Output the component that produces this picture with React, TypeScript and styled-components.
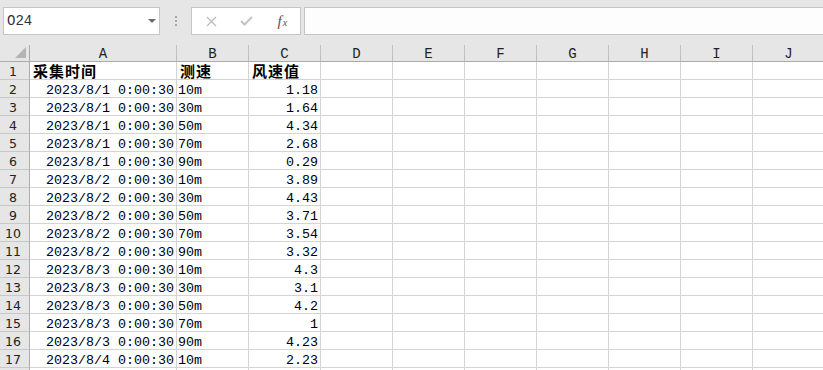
import React from "react";
import styled, { createGlobalStyle } from "styled-components";

const Global = createGlobalStyle`
  html, body { margin: 0; padding: 0; overflow: hidden; background: #ffffff; }
  * { box-sizing: border-box; }
`;

const Page = styled.div`
  width: 823px;
  height: 370px;
  overflow: hidden;
  background: #ffffff;
  display: flex;
  flex-direction: column;
`;

const Toolbar = styled.div`
  height: 45px;
  flex: none;
  background: #e6e6e6;
  display: flex;
  align-items: flex-start;
  padding: 7px 0 0 3px;
`;

const NameBox = styled.div`
  width: 157px;
  height: 28px;
  background: #ffffff;
  border: 1px solid #c6c6c6;
  display: flex;
  align-items: center;
  justify-content: space-between;
  padding: 0 3px 0 3px;
  font-family: "Liberation Mono", monospace;
  font-size: 14px;
  color: #333333;
`;

const DropArrow = styled.span`
  width: 0;
  height: 0;
  border-left: 4px solid transparent;
  border-right: 4px solid transparent;
  border-top: 4px solid #6a6a6a;
`;

const Grip = styled.div`
  width: 31px;
  height: 28px;
  display: flex;
  flex-direction: column;
  align-items: center;
  justify-content: center;
  gap: 2px;
`;

const GripDot = styled.span`
  width: 2px;
  height: 2px;
  background: #a6a6a6;
`;

const FxBox = styled.div`
  width: 110px;
  height: 28px;
  background: #ffffff;
  border: 1px solid #c6c6c6;
  display: flex;
  align-items: center;
  padding-left: 2px;
`;

const FxSlot = styled.div`
  width: 36px;
  height: 26px;
  display: flex;
  align-items: center;
  justify-content: center;
`;

const FxLabel = styled.span`
  display: inline-flex;
  align-items: flex-end;
  font-family: "Liberation Serif", serif;
  font-style: italic;
  color: #555555;
  line-height: 14px;
`;

const FxMain = styled.span`
  font-size: 15px;
`;

const FxSub = styled.span`
  font-size: 10px;
  line-height: 10px;
  margin-left: 1px;
`;

const FormulaInput = styled.div`
  flex: 1;
  height: 28px;
  margin-left: 3px;
  margin-right: -2px;
  background: #fdfdfd;
  border: 1px solid #c6c6c6;
`;

const Sheet = styled.div`
  display: grid;
  grid-template-columns: 30px 147px repeat(9, 72px);
  grid-template-rows: 17px;
  grid-auto-rows: 18px;
  width: 825px;
`;

const Corner = styled.div`
  background: #e6e6e6;
  border-right: 1px solid #ababab;
  border-bottom: 1px solid #ababab;
  display: flex;
  align-items: flex-end;
  justify-content: flex-end;
  padding: 0 3px 3px 0;
`;

const ColHead = styled.div`
  background: #e6e6e6;
  border-right: 1px solid #c0c0c0;
  border-bottom: 1px solid #ababab;
  display: flex;
  align-items: flex-end;
  justify-content: center;
  font-family: "Liberation Mono", monospace;
  font-size: 14px;
  line-height: 14px;
  color: #222222;
`;

const RowHead = styled.div`
  background: #e6e6e6;
  border-right: 1px solid #ababab;
  border-bottom: 1px solid #c8c8c8;
  display: flex;
  align-items: flex-end;
  justify-content: center;
  padding-right: 3px;
  font-family: "DejaVu Sans", sans-serif;
  font-size: 12.5px;
  line-height: 15px;
  color: #222222;
`;

const Cell = styled.div<{ $align?: "left" | "right"; $title?: boolean }>`
  background: #ffffff;
  border-right: 1px solid #d4d4d4;
  border-bottom: 1px solid #d4d4d4;
  display: flex;
  align-items: flex-end;
  justify-content: ${(p) => (p.$align === "right" ? "flex-end" : "flex-start")};
  padding: ${(p) => (p.$title ? "0 0 0 3px" : p.$align === "right" ? "0 2px 0 0" : "0 0 0 1px")};
  white-space: pre;
  font-family: ${(p) =>
    p.$title
      ? `"Noto Sans CJK SC", sans-serif`
      : `"Liberation Mono", "Noto Sans CJK SC", monospace`};
  font-size: ${(p) => (p.$title ? "15px" : "13.33px")};
  font-weight: ${(p) => (p.$title ? 700 : 400)};
  letter-spacing: ${(p) => (p.$title ? "1px" : "0")};
  line-height: ${(p) => (p.$title ? "16px" : "13px")};
  color: #000000;
`;

const cols = ["A", "B", "C", "D", "E", "F", "G", "H", "I", "J"];

const data: [string, string, string][] = [
  ["2023/8/1", "10m", "1.18"],
  ["2023/8/1", "30m", "1.64"],
  ["2023/8/1", "50m", "4.34"],
  ["2023/8/1", "70m", "2.68"],
  ["2023/8/1", "90m", "0.29"],
  ["2023/8/2", "10m", "3.89"],
  ["2023/8/2", "30m", "4.43"],
  ["2023/8/2", "50m", "3.71"],
  ["2023/8/2", "70m", "3.54"],
  ["2023/8/2", "90m", "3.32"],
  ["2023/8/3", "10m", "4.3"],
  ["2023/8/3", "30m", "3.1"],
  ["2023/8/3", "50m", "4.2"],
  ["2023/8/3", "70m", "1"],
  ["2023/8/3", "90m", "4.23"],
  ["2023/8/4", "10m", "2.23"],
];

const emptyCells = (n: number, key: string) =>
  Array.from({ length: n }, (_, i) => <Cell key={`${key}-${i}`} />);

export default function App() {
  return (
    <>
      <Global />
      <Page>
        <Toolbar>
          <NameBox>
            <span>O24</span>
            <DropArrow />
          </NameBox>
          <Grip>
            <GripDot />
            <GripDot />
            <GripDot />
          </Grip>
          <FxBox>
            <FxSlot>
              <svg width="11" height="11" viewBox="0 0 11 11">
                <path d="M1 1 L10 10 M10 1 L1 10" stroke="#bdbdbd" strokeWidth="1.3" fill="none" />
              </svg>
            </FxSlot>
            <FxSlot>
              <svg width="13" height="10" viewBox="0 0 13 10">
                <path d="M1 5 L4.5 8.5 L12 1" stroke="#c4c4c4" strokeWidth="2" fill="none" />
              </svg>
            </FxSlot>
            <FxSlot>
              <FxLabel>
                <FxMain>f</FxMain>
                <FxSub>x</FxSub>
              </FxLabel>
            </FxSlot>
          </FxBox>
          <FormulaInput />
        </Toolbar>
        <Sheet>
          <Corner>
            <svg width="11" height="11" viewBox="0 0 11 11">
              <polygon points="11,0 11,11 0,11" fill="#b4b4b4" />
            </svg>
          </Corner>
          {cols.map((c) => (
            <ColHead key={c}>{c}</ColHead>
          ))}

          <RowHead>1</RowHead>
          <Cell $title>采集时间</Cell>
          <Cell $title>测速</Cell>
          <Cell $title>风速值</Cell>
          {emptyCells(7, "r1")}

          {data.map(([d, h, v], i) => (
            <React.Fragment key={i}>
              <RowHead>{i + 2}</RowHead>
              <Cell $align="right">{`${d} 0:00:30`}</Cell>
              <Cell>{h}</Cell>
              <Cell $align="right">{v}</Cell>
              {emptyCells(7, `r${i + 2}`)}
            </React.Fragment>
          ))}

          <RowHead />
          {emptyCells(10, "r18")}
        </Sheet>
      </Page>
    </>
  );
}
